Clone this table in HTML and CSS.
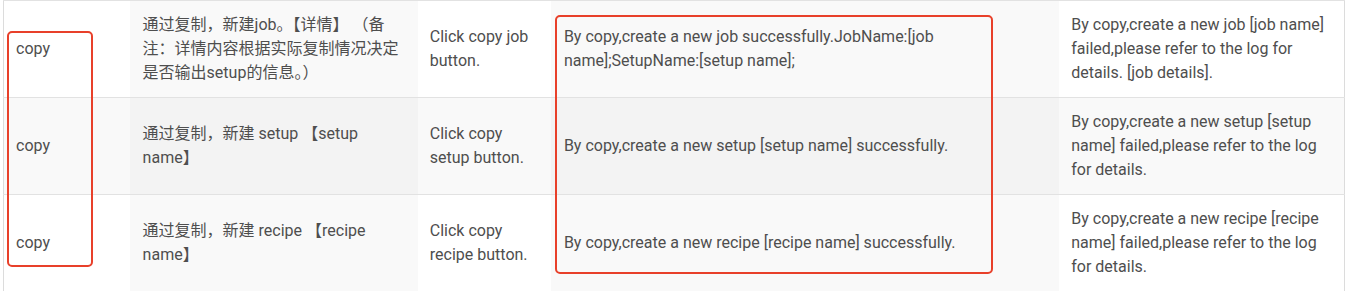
FILE: index.html
```html
<!DOCTYPE html>
<html>
<head>
<meta charset="utf-8">
<link rel="stylesheet" href="styles.css">
</head>
<body>
<div class="wrap">
  <table class="log-table">
    <colgroup>
      <col class="c1"><col class="c2"><col class="c3"><col class="c4"><col class="c5">
    </colgroup>
    <tbody>
      <tr>
        <td>copy</td>
        <td class="alt">通过复制，新建job。【详情】 （备注：详情内容根据实际复制情况决定是否输出setup的信息。）</td>
        <td>Click copy job button.</td>
        <td class="alt">By copy,create a new job successfully.JobName:[job name];SetupName:[setup name];</td>
        <td>By copy,create a new job [job name] failed,please refer to the log for details. [job details].</td>
      </tr>
      <tr class="stripe">
        <td>copy</td>
        <td class="alt">通过复制，新建 setup 【setup name】</td>
        <td>Click copy setup button.</td>
        <td class="alt">By copy,create a new setup [setup name] successfully.</td>
        <td>By copy,create a new setup [setup name] failed,please refer to the log for details.</td>
      </tr>
      <tr>
        <td>copy</td>
        <td class="alt">通过复制，新建 recipe 【recipe name】</td>
        <td>Click copy recipe button.</td>
        <td class="alt">By copy,create a new recipe [recipe name] successfully.</td>
        <td>By copy,create a new recipe [recipe name] failed,please refer to the log for details.</td>
      </tr>
    </tbody>
  </table>
  <div class="mark mark-a"></div>
  <div class="mark mark-b"></div>
</div>
</body>
</html>
```
FILE: styles.css
```css
html, body {
  margin: 0;
  padding: 0;
  background: #ffffff;
}
.wrap {
  position: relative;
  padding-left: 3px;
  width: 1342px;
}
.log-table {
  width: 1342px;
  table-layout: fixed;
  border-collapse: collapse;
  border-left: 1px solid #dcdcdc;
  border-right: 1px solid #dcdcdc;
  font-family: Roboto, "Noto Sans CJK SC", sans-serif;
  font-size: 16px;
  line-height: 24px;
  color: #4e4e4e;
}
.c1 { width: 126px; }
.c2 { width: 288px; }
.c3 { width: 133px; }
.c4 { width: 508px; }
.c5 { width: 285px; }
.log-table tr {
  border-top: 1px solid #e2e2e2;
}
.log-table td {
  padding: 12px 12px;
  height: 72px;
  vertical-align: middle;
  background: #ffffff;
  word-wrap: break-word;
}
.log-table td.alt {
  background: #f9f9f9;
  padding-left: 13px;
}
.log-table tr.stripe td {
  background: #f9f9f9;
}
.log-table tr.stripe td.alt {
  background: #f3f3f3;
}
.mark {
  position: absolute;
  border: 2px solid #e8402a;
  border-radius: 5px;
}
.mark-a {
  left: 7px;
  top: 31px;
  width: 82px;
  height: 232px;
}
.mark-b {
  left: 555px;
  top: 15px;
  width: 434px;
  height: 255px;
}
```
